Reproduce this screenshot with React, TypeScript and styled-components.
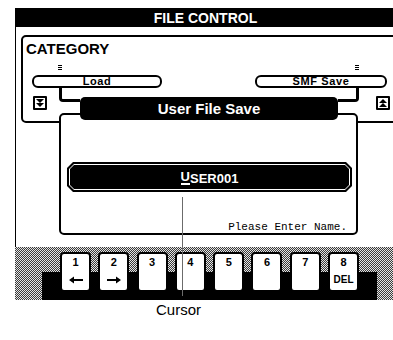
import styled, {createGlobalStyle, css} from 'styled-components'

const GlobalStyle = createGlobalStyle`
  html, body {
    margin: 0;
    padding: 0;
    background: #fff;
    overflow: hidden;
  }
  body {
    font-family: 'Liberation Sans', Arial, sans-serif;
    color: #000;
  }
`

type KeyDef = {num: string; label?: 'left' | 'right' | 'DEL'}

const KEYS: KeyDef[] = [
  {num: '1', label: 'left'},
  {num: '2', label: 'right'},
  {num: '3'},
  {num: '4'},
  {num: '5'},
  {num: '6'},
  {num: '7'},
  {num: '8', label: 'DEL'},
]

function ArrowIcon({dir}: {dir: 'left' | 'right'}) {
  return (
    <svg width="16" height="8" viewBox="0 0 16 8">
      {dir === 'left' ? (
        <path d="M1 4 L6 0.5 L6 3 L15 3 L15 5 L6 5 L6 7.5 Z" />
      ) : (
        <path d="M15 4 L10 0.5 L10 3 L1 3 L1 5 L10 5 L10 7.5 Z" />
      )}
    </svg>
  )
}

function ScrollIcon({dir}: {dir: 'up' | 'down'}) {
  return (
    <svg width="8" height="8" viewBox="0 0 8 8">
      {dir === 'down' ? (
        <path d="M0 0h8L4 4zM0 4h8L4 8z" />
      ) : (
        <path d="M4 0L8 4H0zM4 4L8 8H0z" />
      )}
    </svg>
  )
}

export default function App() {
  return (
    <Page>
      <GlobalStyle />
      <Screen>
        <Header>FILE CONTROL</Header>
        <Display>
          <CategoryPanel>
            <PanelTitle>CATEGORY</PanelTitle>
            <PillRow>
              <PillColumn $width={130}>
                <Marker $offset={26} />
                <Pill>Load</Pill>
              </PillColumn>
              <PillColumn $width={132}>
                <Marker $offset={100} />
                <Pill>SMF Save</Pill>
              </PillColumn>
            </PillRow>
            <ScrollRow>
              <Group>
                <ScrollBox>
                  <ScrollIcon dir="down" />
                </ScrollBox>
                <Connector $side="left" />
              </Group>
              <Group>
                <Connector $side="right" />
                <ScrollBox>
                  <ScrollIcon dir="up" />
                </ScrollBox>
              </Group>
            </ScrollRow>
          </CategoryPanel>

          <Dialog>
            <DialogTitle>User File Save</DialogTitle>
            <DialogFrame>
              <NameOuter>
                <NameRing>
                  <NameInner>
                    <CursorChar>U</CursorChar>SER001
                  </NameInner>
                </NameRing>
              </NameOuter>
              <Hint>Please Enter Name.</Hint>
            </DialogFrame>
          </Dialog>
        </Display>

        <KeyBar>
          {KEYS.map((k) => (
            <SoftKey key={k.num}>
              <KeyNum>{k.num}</KeyNum>
              <KeyLabel>
                {k.label === 'left' && <ArrowIcon dir="left" />}
                {k.label === 'right' && <ArrowIcon dir="right" />}
                {k.label === 'DEL' && 'DEL'}
              </KeyLabel>
            </SoftKey>
          ))}
        </KeyBar>
      </Screen>

      <Callout>
        <CalloutLine />
        <CalloutLabel>Cursor</CalloutLabel>
      </Callout>
    </Page>
  )
}

const octagon = (n: number) => css`
  clip-path: polygon(
    ${n}px 0,
    calc(100% - ${n}px) 0,
    100% ${n}px,
    100% calc(100% - ${n}px),
    calc(100% - ${n}px) 100%,
    ${n}px 100%,
    0 calc(100% - ${n}px),
    0 ${n}px
  );
`

const Page = styled.div`
  position: relative;
  width: 393px;
  height: 340px;
`

const Screen = styled.div`
  margin: 8px 0 0 15px;
  width: 381px;
`

const Header = styled.div`
  height: 19px;
  background: #000;
  color: #fff;
  font-size: 14px;
  font-weight: 700;
  line-height: 20px;
  text-align: center;
`

const Display = styled.div`
  position: relative;
  box-sizing: border-box;
  height: 220px;
  border-left: 1px solid #000;
  padding: 8px 0 0 5px;
`

const CategoryPanel = styled.div`
  box-sizing: border-box;
  width: 382px;
  height: 88px;
  border: 2px solid #000;
  border-radius: 5px;
  padding: 4px 0 0 3px;
`

const PanelTitle = styled.div`
  font-size: 15px;
  font-weight: 700;
  line-height: 16px;
`

const PillRow = styled.div`
  display: flex;
  justify-content: space-between;
  width: 355px;
  margin: 8px 0 0 6px;
`

const PillColumn = styled.div<{$width: number}>`
  display: flex;
  flex-direction: column;
  width: ${(p) => p.$width}px;
`

const Marker = styled.div<{$offset: number}>`
  width: 4px;
  height: 5px;
  margin: 0 0 5px ${(p) => p.$offset}px;
  background: repeating-linear-gradient(#000 0 1px, transparent 1px 2px);
`

const Pill = styled.div`
  box-sizing: border-box;
  height: 13px;
  border: 2px solid #000;
  border-radius: 6px;
  font-size: 11px;
  font-weight: 700;
  line-height: 9px;
  letter-spacing: 0.6px;
  text-align: center;
`

const ScrollRow = styled.div`
  display: flex;
  justify-content: space-between;
  width: 357px;
  margin-left: 7px;
`

const Group = styled.div`
  display: flex;
  align-items: flex-start;
  gap: 12px;

  & + & {
    gap: 17px;
  }
`

const ScrollBox = styled.div`
  box-sizing: border-box;
  width: 14px;
  height: 14px;
  margin-top: 8px;
  border: 2px solid #000;
  border-radius: 1px;
  display: flex;
  align-items: center;
  justify-content: center;
`

const Connector = styled.div<{$side: 'left' | 'right'}>`
  box-sizing: border-box;
  width: 21px;
  height: 14px;
  border-bottom: 3px solid #000;
  ${(p) =>
    p.$side === 'left'
      ? css`
          border-left: 3px solid #000;
          border-bottom-left-radius: 4px;
        `
      : css`
          border-right: 3px solid #000;
          border-bottom-right-radius: 4px;
        `}
`

const Dialog = styled.div`
  position: absolute;
  left: 43px;
  top: 70px;
  width: 299px;
`

const DialogTitle = styled.div`
  position: absolute;
  top: 0;
  left: 21px;
  width: 258px;
  height: 23px;
  background: #000;
  color: #fff;
  border-radius: 5px;
  font-size: 15px;
  font-weight: 700;
  line-height: 23px;
  text-align: center;
  z-index: 1;
`

const DialogFrame = styled.div`
  box-sizing: border-box;
  height: 122px;
  margin-top: 16px;
  border: 2px solid #000;
  border-radius: 5px;
  background: #fff;
  padding: 47px 4px 0 6px;
`

const NameOuter = styled.div`
  box-sizing: border-box;
  height: 30px;
  padding: 2px;
  background: #000;
  ${octagon(6)}
`

const NameRing = styled.div`
  box-sizing: border-box;
  height: 100%;
  padding: 1px;
  background: #fff;
  ${octagon(5)}
`

const NameInner = styled.div`
  height: 100%;
  background: #000;
  color: #fff;
  display: flex;
  align-items: center;
  justify-content: center;
  font-size: 13px;
  font-weight: 700;
  padding-top: 2px;
  box-sizing: border-box;
  ${octagon(4)}
`

const CursorChar = styled.span`
  border-bottom: 2px solid #fff;
  line-height: 12px;
`

const Hint = styled.div`
  margin: 29px 5px 0 0;
  font-family: 'Liberation Mono', 'Courier New', monospace;
  font-size: 11px;
  line-height: 12px;
  text-align: right;
`

const KeyBar = styled.div`
  box-sizing: border-box;
  height: 53px;
  padding: 5px 0 0 45px;
  background:
    linear-gradient(#000, #000) 27px 25px / 335px 28px no-repeat,
    repeating-conic-gradient(#3a3a3a 0 25%, #e4e4e4 0 50%) 0 0 / 2px 2px;
  display: grid;
  grid-template-columns: repeat(8, 31px);
  column-gap: 7.3px;
  align-items: start;
`

const SoftKey = styled.div`
  box-sizing: border-box;
  height: 40px;
  border: 2px solid #000;
  border-radius: 4px;
  background: #fff;
  display: flex;
  flex-direction: column;
  align-items: center;
  padding: 2px 0 5px;
  font-weight: 700;
`

const KeyNum = styled.div`
  font-size: 11px;
  line-height: 12px;
`

const KeyLabel = styled.div`
  margin-top: auto;
  height: 10px;
  display: flex;
  align-items: center;
  font-size: 10px;
  line-height: 10px;
`

const Callout = styled.div`
  position: absolute;
  left: 152px;
  top: 189px;
  width: 60px;
  display: flex;
  flex-direction: column;
  align-items: center;
`

const CalloutLine = styled.div`
  width: 1px;
  height: 99px;
  background: #6b6b6b;
`

const CalloutLabel = styled.div`
  margin-top: 5px;
  margin-right: 7px;
  font-size: 15px;
  line-height: 17px;
`
